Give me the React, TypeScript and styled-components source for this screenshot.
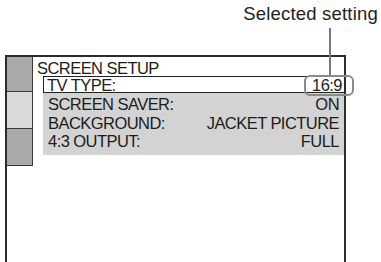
import styled, { createGlobalStyle } from "styled-components";

const GlobalStyle = createGlobalStyle`
  html, body {
    margin: 0;
    padding: 0;
    background: #ffffff;
  }
  body {
    font-family: "Liberation Sans", Arial, sans-serif;
    color: #1c1c1c;
  }
`;

const Page = styled.div`
  position: relative;
  width: 381px;
  height: 262px;
  overflow: hidden;
  background: #ffffff;
`;

const Header = styled.div`
  height: 55px;
  display: flex;
  justify-content: flex-end;
  padding: 3px 3px 0 0;
  box-sizing: border-box;
`;

const Caption = styled.span`
  font-size: 18.5px;
  line-height: 21px;
  letter-spacing: 0.2px;
  color: #222;
`;

const Frame = styled.div`
  margin-left: 5px;
  width: 341px;
  height: 207px;
  box-sizing: border-box;
  border: 2px solid #2c2c2c;
  border-bottom: none;
  display: flex;
`;

const Sidebar = styled.div`
  width: 26px;
  flex-shrink: 0;
  display: flex;
  flex-direction: column;
  align-self: flex-start;
`;

const SideCell = styled.div<{ $light?: boolean; $h: number }>`
  height: ${(p) => p.$h}px;
  background: ${(p) => (p.$light ? "#dadada" : "#a9a9a9")};
  border-right: 1.5px solid #3a3a3a;
  border-bottom: 1.5px solid #3a3a3a;
`;

const Content = styled.div`
  flex: 1;
  padding-top: 2px;
  font-size: 16.5px;
  letter-spacing: -0.55px;
`;

const Title = styled.div`
  line-height: 18px;
  padding-left: 4px;
  height: 17px;
`;

const SelectedRow = styled.div`
  margin-left: 10px;
  height: 17px;
  box-sizing: border-box;
  border: 1.5px solid #222;
  border-right: none;
  display: flex;
  justify-content: space-between;
  align-items: center;
  line-height: 16px;
  padding: 0 2px 0 3px;
  background: #fff;
`;

const Options = styled.div`
  margin-left: 10px;
  background: #d3d3d3;
  padding: 2px 5px 4px 5px;
`;

const OptionRow = styled.div`
  display: flex;
  justify-content: space-between;
  line-height: 18.5px;
  height: 18.5px;
`;

const LeaderLine = styled.div`
  position: absolute;
  left: 329px;
  top: 28px;
  width: 1.5px;
  height: 48px;
  background: #7a7a7a;
`;

const Highlight = styled.div`
  position: absolute;
  left: 304px;
  top: 75px;
  width: 50px;
  height: 21px;
  box-sizing: border-box;
  border: 2px solid #8a8a8a;
  border-radius: 6px;
`;

const options = [
  { label: "SCREEN SAVER:", value: "ON" },
  { label: "BACKGROUND:", value: "JACKET PICTURE" },
  { label: "4:3 OUTPUT:", value: "FULL" },
];

export default function App() {
  return (
    <Page>
      <GlobalStyle />
      <Header>
        <Caption>Selected setting</Caption>
      </Header>
      <Frame>
        <Sidebar>
          <SideCell $h={34} />
          <SideCell $h={36} $light />
          <SideCell $h={36} />
        </Sidebar>
        <Content>
          <Title>SCREEN SETUP</Title>
          <SelectedRow>
            <span>TV TYPE:</span>
            <span>16:9</span>
          </SelectedRow>
          <Options>
            {options.map((o) => (
              <OptionRow key={o.label}>
                <span>{o.label}</span>
                <span>{o.value}</span>
              </OptionRow>
            ))}
          </Options>
        </Content>
      </Frame>
      <LeaderLine />
      <Highlight />
    </Page>
  );
}
